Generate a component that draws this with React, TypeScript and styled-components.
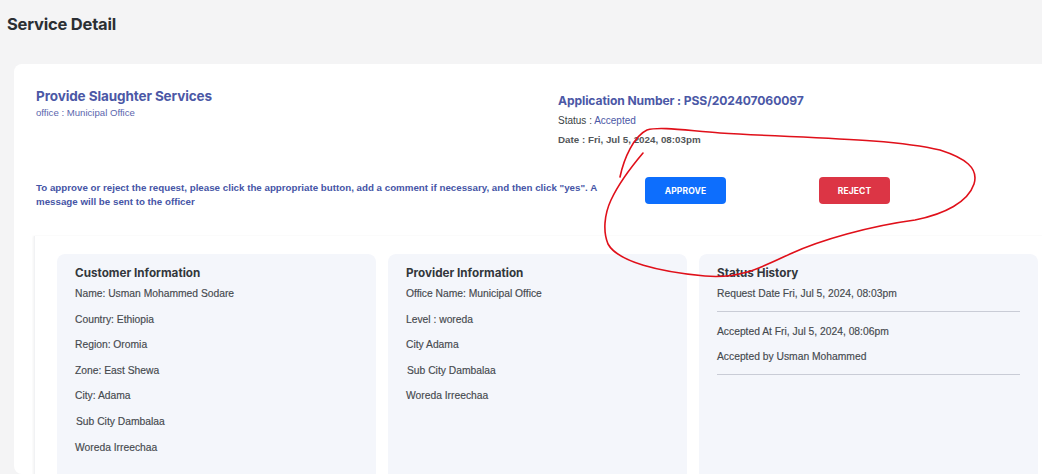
import React from "react";
import styled, { createGlobalStyle } from "styled-components";

const Global = createGlobalStyle`
  html, body { margin: 0; padding: 0; }
  body {
    background: #f4f4f5;
    font-family: "Liberation Sans", Arial, sans-serif;
    overflow: hidden;
    width: 1042px;
    height: 474px;
  }
`;

const Page = styled.div`
  position: relative;
  padding: 12px 0 0 7px;
  height: 474px;
  box-sizing: border-box;
  overflow: hidden;
`;

const PageTitle = styled.h1`
  margin: 0;
  font-family: Inter, "Noto Sans", sans-serif;
  font-size: 16.5px;
  font-weight: 700;
  color: #2b2f33;
  line-height: 24px;
  letter-spacing: -0.2px;
`;

const Card = styled.div`
  margin: 28px -40px 0 7px;
  background: #ffffff;
  border-radius: 8px;
  padding: 24px 0 0 22px;
  height: 410px;
  box-sizing: border-box;
`;

const HeaderRow = styled.div`
  display: flex;
  align-items: flex-start;
`;

const HeaderLeft = styled.div`
  width: 522px;
`;

const ServiceName = styled.h2`
  margin: 0;
  font-family: Inter, "Noto Sans", sans-serif;
  font-size: 13.5px;
  font-weight: 700;
  color: #4b58a6;
  line-height: 17px;
  letter-spacing: -0.1px;
`;

const OfficeLine = styled.div`
  font-size: 9.6px;
  color: #5b66ad;
  margin-top: 2px;
  line-height: 12px;
`;

const HeaderRight = styled.div`
  padding-top: 5px;
  display: flex;
  flex-direction: column;
`;

const AppNumber = styled.div`
  font-family: Inter, "Noto Sans", sans-serif;
  font-size: 12.1px;
  font-weight: 700;
  color: #4b58a6;
  line-height: 16px;
  letter-spacing: -0.1px;
`;

const MetaLine = styled.div<{ $strong?: boolean }>`
  font-size: ${(p) => (p.$strong ? "9.8px" : "10px")};
  color: #3b3f44;
  line-height: 19px;
  margin-top: ${(p) => (p.$strong ? "0" : "2px")};
  font-weight: ${(p) => (p.$strong ? 700 : 400)};
  opacity: ${(p) => (p.$strong ? 0.88 : 1)};
`;

const Accent = styled.span`
  color: #4b58a6;
`;

const ActionRow = styled.div`
  display: flex;
  align-items: flex-start;
  margin-top: 27px;
`;

const Instruction = styled.p`
  margin: 5px 0 0;
  width: 570px;
  font-size: 9.75px;
  font-weight: 700;
  color: #4655a6;
  line-height: 14px;
`;

const Button = styled.button<{ $variant: "approve" | "reject" }>`
  border: none;
  border-radius: 4px;
  height: 27px;
  margin-top: 1px;
  width: ${(p) => (p.$variant === "approve" ? "81px" : "71px")};
  margin-left: ${(p) => (p.$variant === "approve" ? "39px" : "93px")};
  background: ${(p) => (p.$variant === "approve" ? "#0d6efd" : "#dc3545")};
  color: #fff;
  font-family: Inter, "Noto Sans", sans-serif;
  font-size: 8.5px;
  font-weight: 700;
  letter-spacing: 0.1px;
  padding: 0;
  cursor: pointer;
`;

const Inner = styled.div`
  margin: 27px 0 0 -2px;
  padding: 18px 0 0 22px;
  box-shadow: -1px 0 2px rgba(0, 0, 0, 0.05);
  border-left: 1px solid #f1f2f4;
  height: 240px;
`;

const InfoGrid = styled.div`
  display: grid;
  grid-template-columns: 319px 299px 339px;
  gap: 12px;
`;

const InfoCard = styled.div`
  background: #f4f6fb;
  border-radius: 8px;
  padding: 12px 18px 0 18px;
  height: 240px;
`;

const InfoTitle = styled.h3`
  margin: 0 0 7px;
  font-family: Inter, "Noto Sans", sans-serif;
  font-size: 11.7px;
  font-weight: 700;
  color: #33373c;
  line-height: 15px;
`;

const InfoLine = styled.div<{ $indent?: boolean }>`
  font-size: 10.3px;
  color: #45494e;
  line-height: 12px;
  margin-bottom: 13.6px;
  padding-left: ${(p) => (p.$indent ? "1px" : "0")};
  -webkit-text-stroke: 0.15px #45494e;
`;

const Divider = styled.hr`
  border: none;
  border-top: 1px solid #c9ccd6;
  margin: -3px 0 14px;
`;

const Annotation = styled.svg`
  position: absolute;
  left: 0;
  top: 0;
  pointer-events: none;
`;

export default function App() {
  return (
    <>
      <Global />
      <Page>
        <PageTitle>Service Detail</PageTitle>
        <Card>
          <HeaderRow>
            <HeaderLeft>
              <ServiceName>Provide Slaughter Services</ServiceName>
              <OfficeLine>office : Municipal Office</OfficeLine>
            </HeaderLeft>
            <HeaderRight>
              <AppNumber>Application Number : PSS/202407060097</AppNumber>
              <MetaLine>
                Status : <Accent>Accepted</Accent>
              </MetaLine>
              <MetaLine $strong>Date : Fri, Jul 5, 2024, 08:03pm</MetaLine>
            </HeaderRight>
          </HeaderRow>
          <ActionRow>
            <Instruction>
              To approve or reject the request, please click the appropriate button, add a comment if
              necessary, and then click "yes". A message will be sent to the officer
            </Instruction>
            <Button $variant="approve">APPROVE</Button>
            <Button $variant="reject">REJECT</Button>
          </ActionRow>
          <Inner>
            <InfoGrid>
              <InfoCard>
                <InfoTitle>Customer Information</InfoTitle>
                <InfoLine>Name: Usman Mohammed Sodare</InfoLine>
                <InfoLine>Country: Ethiopia</InfoLine>
                <InfoLine>Region: Oromia</InfoLine>
                <InfoLine>Zone: East Shewa</InfoLine>
                <InfoLine>City: Adama</InfoLine>
                <InfoLine $indent>Sub City Dambalaa</InfoLine>
                <InfoLine>Woreda Irreechaa</InfoLine>
              </InfoCard>
              <InfoCard>
                <InfoTitle>Provider Information</InfoTitle>
                <InfoLine>Office Name: Municipal Office</InfoLine>
                <InfoLine>Level : woreda</InfoLine>
                <InfoLine>City Adama</InfoLine>
                <InfoLine $indent>Sub City Dambalaa</InfoLine>
                <InfoLine>Woreda Irreechaa</InfoLine>
              </InfoCard>
              <InfoCard>
                <InfoTitle>Status History</InfoTitle>
                <InfoLine>Request Date Fri, Jul 5, 2024, 08:03pm</InfoLine>
                <Divider />
                <InfoLine>Accepted At Fri, Jul 5, 2024, 08:06pm</InfoLine>
                <InfoLine>Accepted by Usman Mohammed</InfoLine>
                <Divider />
              </InfoCard>
            </InfoGrid>
          </Inner>
        </Card>
        <Annotation width="1042" height="474" viewBox="0 0 1042 474">
          <path
            d="M643,153 C632,166 618,185 611,200 C604,215 603,232 608,244 C618,262 660,272 705,276 C740,279 760,268 790,254 C820,240 870,226 915,220 C945,214 968,202 974,184 C979,168 965,158 940,150 C890,138 800,138 720,133 C690,131 660,126 647,130 C634,136 624,158 620,177"
            fill="none"
            stroke="#e0101a"
            strokeWidth="1.6"
            strokeLinecap="round"
          />
        </Annotation>
      </Page>
    </>
  );
}
